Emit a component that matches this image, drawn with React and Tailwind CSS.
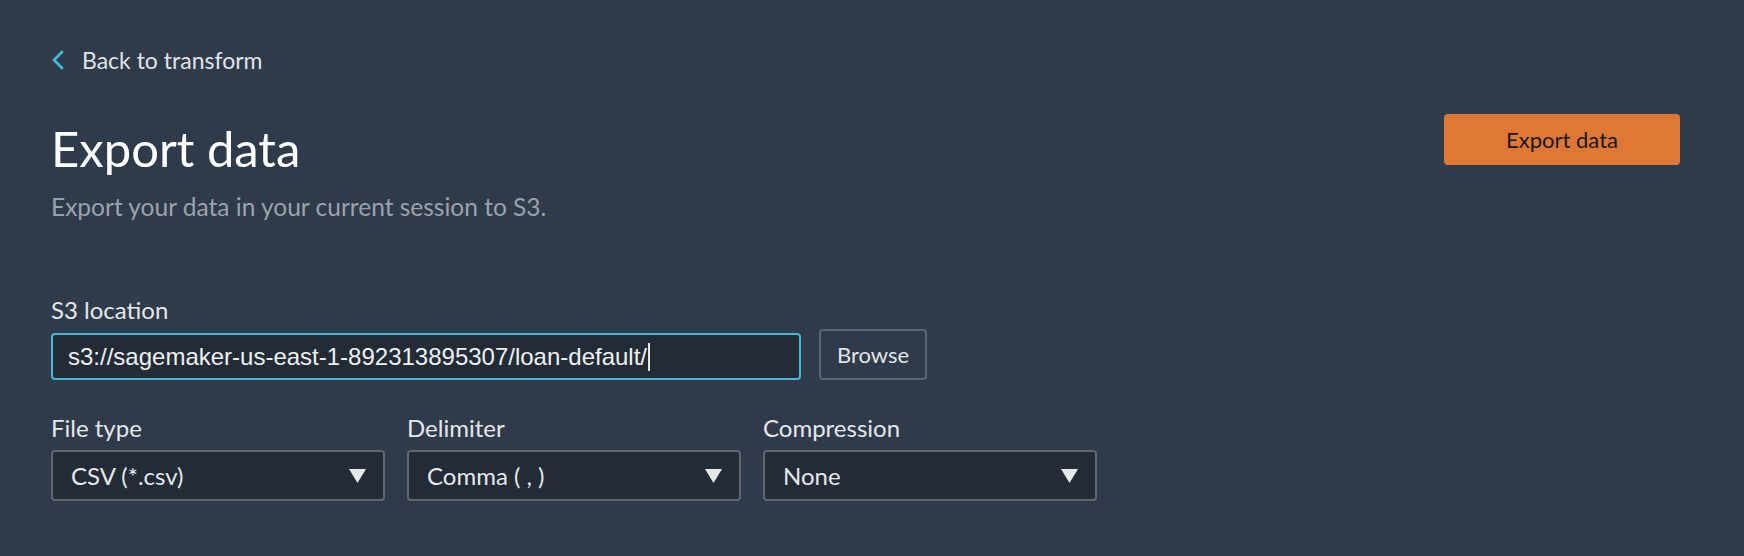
import React from "react";

function Select({ label, value }) {
  return (
    <div className="flex flex-col w-[334px]">
      <div className="text-[24px] leading-[28px] text-[#e5e7ea] mb-[8px]">{label}</div>
      <div className="h-[51px] rounded-[4px] border-2 border-[#5f6670] bg-[#232b37] flex items-center justify-between pl-[18px] pr-[17px]">
        <span className="text-[24px] text-[#e5e7ea]">{value}</span>
        <svg width="17" height="14" viewBox="0 0 17 14">
          <polygon points="0,0 17,0 8.5,14" fill="#e5e7ea" />
        </svg>
      </div>
    </div>
  );
}

export default function App() {
  return (
    <div
      className="w-full h-[556px] bg-[#2f3a4a] pl-[51px] pr-[64px] pt-[42px]"
      style={{ fontFamily: "Lato, 'Open Sans', sans-serif" }}
    >
      <div className="flex items-center gap-[17px] h-[36px]">
        <svg width="14" height="20" viewBox="0 0 14 20">
          <polyline points="11,2 3,10 11,18" fill="none" stroke="#44b9d6" strokeWidth="2.8" strokeLinecap="round" strokeLinejoin="round" />
        </svg>
        <span className="text-[23px] text-[#e1e4e8]">Back to transform</span>
      </div>
      <div className="flex justify-between items-start mt-[42px]">
        <div>
          <h1 className="text-[49px] leading-[56px] text-white font-normal">Export data</h1>
          <p className="text-[24.5px] leading-[30px] text-[#9aa3ad] mt-[16px]">Export your data in your current session to S3.</p>
        </div>
        <button className="w-[236px] h-[51px] -mt-[6px] rounded-[4px] bg-[#df7834] text-[#16191f] text-[22px]">Export data</button>
      </div>
      <div className="mt-[74px]">
        <div className="text-[24px] leading-[28px] text-[#e5e7ea] mb-[5px]">S3 location</div>
        <div className="flex items-end gap-[18px]">
          <div className="w-[750px] h-[47px] rounded-[4px] border-2 border-[#44b9d6] bg-[#232b37] flex items-center pl-[15px]">
            <span className="text-[24px] text-[#eef0f2]" style={{ fontFamily: "'Liberation Sans', Arial, sans-serif" }}>
              s3://sagemaker-us-east-1-892313895307/loan-default/
            </span>
            <span className="w-[2px] h-[28px] bg-[#e5e7ea] ml-[1px]" />
          </div>
          <button className="w-[108px] h-[51px] rounded-[4px] border-2 border-[#5f6670] text-[22px] text-[#e1e4e8]">Browse</button>
        </div>
      </div>
      <div className="flex gap-[22px] mt-[34px]">
        <Select label="File type" value="CSV (*.csv)" />
        <Select label="Delimiter" value="Comma ( , )" />
        <Select label="Compression" value="None" />
      </div>
    </div>
  );
}
